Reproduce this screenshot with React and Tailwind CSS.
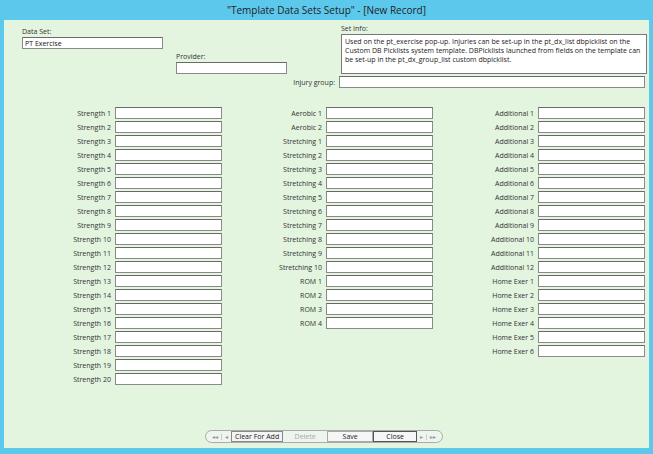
export default function App() {
  const c1 = Array.from({ length: 20 }, (_, i) => `Strength ${i + 1}`);
  const c2 = ["Aerobic 1", "Aerobic 2", ...Array.from({ length: 10 }, (_, i) => `Stretching ${i + 1}`), "ROM 1", "ROM 2", "ROM 3", "ROM 4"];
  const c3 = [...Array.from({ length: 12 }, (_, i) => `Additional ${i + 1}`), ...Array.from({ length: 6 }, (_, i) => `Home Exer ${i + 1}`)];
  const inp = "h-[12px] bg-white border border-[#8a8a8a] border-t-[#6a6a6a]";
  const Col = ({ items, lw }) => (
    <div className="flex flex-col">
      {items.map((t) => (
        <div key={t} className="flex items-center h-[14px]">
          <div className="text-right pr-[4px] text-[#333]" style={{ width: lw }}>{t}</div>
          <div className={inp + " w-[107px]"} />
        </div>
      ))}
    </div>
  );
  return (
    <div className="w-[653px] h-[454px] bg-[#5cc8ec] flex flex-col text-[7px] leading-none" style={{ fontFamily: '"Open Sans", "Noto Sans", sans-serif' }}>
      <div className="h-[20px] flex items-center justify-center text-[10px] text-[#222]">"Template Data Sets Setup" - [New Record]</div>
      <div className="mx-[4px] flex-1 bg-[#e3f4df] relative flex flex-col">
        <div className="flex">
          <div className="ml-[18px] mt-[8px] w-[141px]">
            <div className="mb-[2px] text-[#333]">Data Set:</div>
            <div className={inp + " w-[141px] px-[2px] flex items-center text-[#111]"}>PT Exercise</div>
          </div>
          <div className="ml-[13px] mt-[33px]">
            <div className="mb-[2px] text-[#333]">Provider:</div>
            <div className={inp + " w-[111px] h-[11px]"} />
          </div>
          <div className="ml-[52px] mt-[5px] flex flex-col">
            <div className="ml-[2px] mb-[2px] text-[#333]">Set Info:</div>
            <div className="flex">
              <div className="w-[2px]" />
              <div className="w-[306px] h-[40px] bg-white border border-[#777] px-[3px] py-[2px] text-[#222] leading-[9px]">
                Used on the pt_exercise pop-up. Injuries can be set-up in the pt_dx_list dbpicklist on the Custom DB Picklists system template. DBPicklists launched from fields on the template can be set-up in the pt_dx_group_list custom dbpicklist.
              </div>
            </div>
            <div className="flex items-center mt-[2px] -ml-[50px]">
              <div className="w-[50px] text-right pr-[4px] text-[#333]">Injury group:</div>
              <div className={inp + " w-[306px] h-[11px]"} />
            </div>
          </div>
        </div>
        <div className="flex mt-[18px]">
          <Col items={c1} lw={111} />
          <Col items={c2} lw={104} />
          <Col items={c3} lw={105} />
        </div>
        <div className="absolute left-[201px] top-[410px] flex items-center h-[13px] border border-[#aaa] rounded-full bg-[#eef4ee] px-[3px] text-[#222]">
          <span className="px-[3px] text-[#999] text-[6px]">◂◂</span>
          <span className="px-[3px] text-[#999] text-[6px] border-l border-[#ccc]">◂</span>
          <span className="px-[3px] h-[11px] flex items-center border border-[#888] bg-[#f4f4f4]">Clear For Add</span>
          <span className="w-[44px] text-center text-[#aaa]">Delete</span>
          <span className="w-[46px] h-[11px] flex items-center justify-center border border-[#aaa] bg-[#f6f6f6]">Save</span>
          <span className="w-[44px] h-[11px] flex items-center justify-center border border-[#555] bg-[#f6f6f6]">Close</span>
          <span className="px-[3px] text-[#999] text-[6px]">▸</span>
          <span className="px-[3px] text-[#999] text-[6px] border-l border-[#ccc]">▸▸</span>
        </div>
      </div>
      <div className="h-[6px]" />
    </div>
  );
}
